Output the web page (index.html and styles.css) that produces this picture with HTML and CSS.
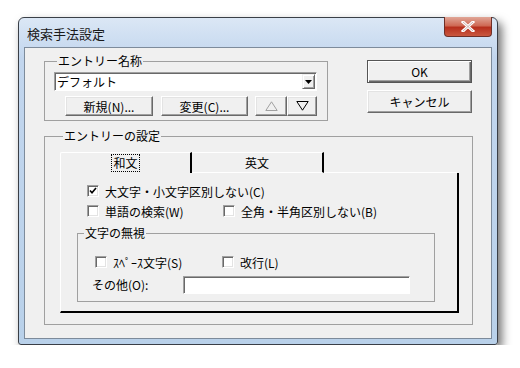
FILE: index.html
```html
<!DOCTYPE html>
<html lang="ja">
<head>
    <meta charset="UTF-8">
    <title>検索手法設定</title>
    <link rel="stylesheet" href="styles.css">
</head>
<body>
    <div class="window">
        <div class="titlebar">
            <span class="title">検索手法設定</span>
            <div class="close">
                <svg width="14" height="11" viewBox="0 0 14 11"><path d="M2 1 L12 10 M12 1 L2 10" stroke="#fff" stroke-width="3" stroke-linecap="square"/><path d="M2 1 L12 10 M12 1 L2 10" stroke="#6b2b22" stroke-width="1" opacity="0.35"/></svg>
            </div>
        </div>
        <div class="client">
            <div class="top-row">
                <div class="group group-entry">
                    <div class="group-label">エントリー名称</div>
                    <div class="combo">
                        <span class="combo-text">デフォルト</span>
                        <span class="combo-btn">
                            <svg width="7" height="4" viewBox="0 0 7 4"><path d="M0 0 H7 L3.5 4 Z" fill="#000"/></svg>
                        </span>
                    </div>
                    <div class="btn-row">
                        <button class="btn btn-new">新規(N)...</button>
                        <button class="btn btn-edit">変更(C)...</button>
                        <button class="btn btn-up">
                            <svg width="13" height="10" viewBox="0 0 13 10"><path d="M6.5 0.8 L12.2 9.5 H0.8 Z" fill="none" stroke="#a0a0a0"/></svg>
                        </button>
                        <button class="btn btn-down">
                            <svg width="13" height="10" viewBox="0 0 13 10"><path d="M0.8 0.5 H12.2 L6.5 9.2 Z" fill="none" stroke="#000"/></svg>
                        </button>
                    </div>
                </div>
                <div class="side-buttons">
                    <button class="btn btn-side btn-default">OK</button>
                    <button class="btn btn-side">キャンセル</button>
                </div>
            </div>

            <div class="group group-settings">
                <div class="group-label">エントリーの設定</div>
                <div class="tabs">
                    <div class="tab tab-active"><span class="focus">和文</span></div>
                    <div class="tab">英文</div>
                    <div class="tab-fill"></div>
                </div>
                <div class="panel">
                    <div class="check-grid">
                        <label class="check wide"><span class="box checked"><svg width="8" height="8" viewBox="0 0 8 8"><path d="M1 3.5 L3 5.8 L7 1" fill="none" stroke="#000" stroke-width="1.6"/></svg></span>大文字・小文字区別しない(C)</label>
                        <label class="check"><span class="box"></span>単語の検索(W)</label>
                        <label class="check"><span class="box"></span>全角・半角区別しない(B)</label>
                    </div>
                    <div class="group group-ignore">
                        <div class="group-label">文字の無視</div>
                        <div class="ignore-row">
                            <label class="check"><span class="box"></span>ｽﾍﾟｰｽ文字(S)</label>
                            <label class="check"><span class="box"></span>改行(L)</label>
                        </div>
                        <div class="other-row">
                            <span class="other-label">その他(O):</span>
                            <div class="field"></div>
                        </div>
                    </div>
                </div>
            </div>
        </div>
    </div>
</body>
</html>
```

FILE: styles.css
```css
body {
    margin: 0;
    background: #fff;
    font-family: "Noto Sans CJK JP", "Liberation Sans", sans-serif;
    font-size: 12px;
    color: #000;
}
.window {
    margin: 17px 0 0 18px;
    width: 480px;
    height: 328px;
    box-sizing: border-box;
    border: 1px solid #3a3f47;
    border-radius: 6px 6px 3px 3px;
    background: linear-gradient(#dbe7f5, #c2d6ee 40px, #b9d1ea);
    box-shadow: 4px 5px 10px rgba(0, 0, 0, 0.55);
    display: flex;
    flex-direction: column;
}
.titlebar {
    height: 29px;
    display: flex;
    align-items: flex-start;
    justify-content: space-between;
    padding-left: 8px;
}
.title {
    line-height: 31px;
    font-size: 13px;
    color: #1a1a1a;
}
.close {
    width: 46px;
    height: 19px;
    margin: -1px 5px 0 0;
    border: 1px solid #6e2f27;
    border-top: none;
    border-radius: 0 0 4px 4px;
    background: linear-gradient(#e0a697, #cf6a55 45%, #b7301d 55%, #c9573f);
    display: flex;
    align-items: center;
    justify-content: center;
}
.client {
    flex: 1;
    margin: 0 5px 5px 5px;
    border: 1px solid #7d8b9b;
    background: #f0f0f0;
}
.top-row {
    display: flex;
    align-items: flex-start;
}
.group {
    border: 1px solid #a0a0a0;
    box-sizing: border-box;
}
.group-label {
    display: table;
    margin: -9px 0 0 3px;
    padding: 0 1px;
    line-height: 16px;
    background: #f0f0f0;
}
.group-entry {
    margin: 13px 0 0 19px;
    width: 284px;
    height: 60px;
    padding-left: 9px;
}
.combo {
    margin-top: 3px;
    width: 263px;
    height: 19px;
    box-sizing: border-box;
    background: #fff;
    border: 1px solid;
    border-color: #a0a0a0 #fff #fff #a0a0a0;
    box-shadow: inset 1px 1px #696969;
    display: flex;
    align-items: center;
    justify-content: space-between;
}
.combo-text {
    padding-left: 2px;
    line-height: 16px;
}
.combo-btn {
    width: 13px;
    height: 15px;
    margin-right: 1px;
    box-sizing: border-box;
    background: #f0f0f0;
    border: 1px solid;
    border-color: #f0f0f0 #696969 #696969 #f0f0f0;
    box-shadow: inset 1px 1px #fff, inset -1px -1px #a0a0a0;
    display: flex;
    align-items: center;
    justify-content: center;
}
.btn-row {
    margin: 5px 0 0 11px;
    display: flex;
}
.btn {
    height: 20px;
    padding: 0;
    box-sizing: border-box;
    font-family: inherit;
    font-size: 12px;
    color: #000;
    background: #f0f0f0;
    border: 1px solid;
    border-color: #fff #696969 #696969 #fff;
    box-shadow: inset -1px -1px #a0a0a0, inset 1px 1px #e3e3e3;
    display: flex;
    align-items: center;
    justify-content: center;
}
.btn-new { width: 88px; }
.btn-edit { width: 87px; margin-left: 8px; }
.btn-up { width: 32px; margin-left: 7px; }
.btn-down { width: 30px; }
.side-buttons {
    margin: 12px 0 0 39px;
    display: flex;
    flex-direction: column;
    gap: 7px;
}
.btn-side {
    width: 105px;
    height: 23px;
}
.btn-default {
    border-color: #555;
    box-shadow: inset 1px 1px #fff, inset -1px -1px #696969, inset -2px -2px #a0a0a0;
}
.group-settings {
    margin: 15px 0 0 19px;
    width: 429px;
    height: 189px;
    padding: 0 0 0 15px;
}
.tabs {
    margin-top: 8px;
    width: 399px;
    height: 21px;
    display: flex;
}
.tab {
    width: 132px;
    box-sizing: border-box;
    border-top: 1px solid #fff;
    border-right: 2px solid #000;
    border-bottom: 1px solid #fff;
    display: flex;
    justify-content: center;
    align-items: center;
    line-height: 16px;
}
.tab-active {
    border-left: 1px solid #fff;
    border-bottom: none;
    border-radius: 2px 0 0 0;
}
.focus {
    outline: 1px dotted #000;
    padding: 0 1px;
}
.tab-fill {
    flex: 1;
    margin-right: 2px;
    border-bottom: 1px solid #fff;
}
.panel {
    width: 399px;
    height: 140px;
    box-sizing: border-box;
    border-left: 1px solid #fff;
    border-right: 2px solid #000;
    border-bottom: 2px solid #000;
    padding: 8px 0 0 0;
}
.check-grid {
    padding-left: 26px;
    display: grid;
    grid-template-columns: 136px auto;
}
.check {
    height: 20px;
    display: flex;
    align-items: center;
    white-space: nowrap;
}
.wide {
    grid-column: 1 / 3;
}
.box {
    width: 12px;
    height: 12px;
    margin-right: 6px;
    box-sizing: border-box;
    background: #fff;
    border: 1px solid;
    border-color: #a0a0a0 #fff #fff #a0a0a0;
    box-shadow: inset 1px 1px #696969, inset -1px -1px #e3e3e3;
    display: flex;
    align-items: center;
    justify-content: center;
}
.group-ignore {
    margin: 12px 0 0 16px;
    width: 358px;
    height: 69px;
}
.group-ignore .group-label {
    margin-left: 6px;
}
.ignore-row {
    margin-top: 11px;
    padding-left: 17px;
    display: grid;
    grid-template-columns: 127px auto;
}
.other-row {
    margin-top: 4px;
    padding-left: 14px;
    display: flex;
    align-items: center;
}
.other-label {
    width: 91px;
    line-height: 18px;
}
.field {
    width: 227px;
    height: 18px;
    box-sizing: border-box;
    background: #fff;
    border: 1px solid;
    border-color: #a0a0a0 #fff #fff #a0a0a0;
    box-shadow: inset 1px 1px #696969;
}
```
